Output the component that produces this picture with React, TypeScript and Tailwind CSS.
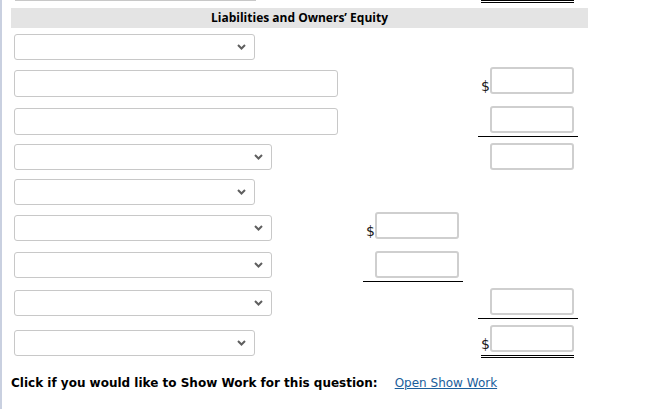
import React from "react";

function Chevron() {
  return (
    <svg width="9" height="6" viewBox="0 0 9 6" className="absolute right-[8px] top-1/2 -translate-y-1/2">
      <path d="M1 1 L4.5 4.5 L8 1" fill="none" stroke="#5f5f5f" strokeWidth="2" />
    </svg>
  );
}

function Select({ wide }: { wide?: boolean }) {
  return (
    <div
      className={`relative h-[26px] rounded-[3px] border border-[#c8c8c8] bg-white ${
        wide ? "w-[258px]" : "w-[241px]"
      }`}
    >
      <Chevron />
    </div>
  );
}

function TextBox() {
  return <div className="h-[27px] w-[324px] rounded-[3px] border border-[#c8c8c8] bg-white" />;
}

function Amount({ dollar, line }: { dollar?: boolean; line?: boolean }) {
  return (
    <div className={`flex w-[100px] items-end ${line ? "border-b border-black pb-[3px]" : ""}`}>
      <span className="w-[12px] pl-[3px] text-[14px] leading-[15px] text-[#1a1a1a]">
        {dollar ? "$" : ""}
      </span>
      <div className="h-[27px] w-[84px] rounded-[3px] border-2 border-[#cfcfcf] bg-white" />
    </div>
  );
}

function Row({
  h,
  left,
  mid,
  right,
}: {
  h: string;
  left: React.ReactNode;
  mid?: React.ReactNode;
  right?: React.ReactNode;
}) {
  return (
    <div className={`flex ${h}`}>
      <div className="w-[352px] pl-[3px]">{left}</div>
      <div className="w-[115px]">{mid}</div>
      <div className="w-[110px]">{right}</div>
    </div>
  );
}

export default function App() {
  return (
    <div
      className="relative h-[409px] w-[665px] overflow-hidden bg-white"
      style={{ fontFamily: "'DejaVu Sans', Verdana, sans-serif" }}
    >
      <div className="absolute left-0 top-0 h-full w-[2px] bg-[#c9d0e0]" />
      <div className="pl-[11px]">
        {/* top remnants */}
        <div className="flex h-[8px]">
          <div className="ml-[4px] h-[1px] w-[241px] bg-[#c8c8c8]" />
          <div className="ml-[225px] h-[3px] w-[93px] border-y border-black" />
        </div>

        <div
          className="flex h-[20px] w-[577px] items-center justify-center bg-[#e4e4e4] text-[12px] font-bold text-black"
          style={{ fontFamily: "'Open Sans', sans-serif" }}
        >
          Liabilities and Owners’ Equity
        </div>

        <Row h="h-[38px]" left={<div className="pt-[6px]"><Select /></div>} />
        <Row
          h="h-[38px]"
          left={<div className="pt-[4px]"><TextBox /></div>}
          right={<div className="pt-[1px]"><Amount dollar /></div>}
        />
        <Row
          h="h-[38px]"
          left={<div className="pt-[4px]"><TextBox /></div>}
          right={<div className="pt-[2px]"><Amount line /></div>}
        />
        <Row
          h="h-[35px]"
          left={<div className="pt-[2px]"><Select wide /></div>}
          right={<div className="pt-[1px]"><Amount /></div>}
        />
        <Row h="h-[33px]" left={<div className="pt-[2px]"><Select /></div>} />
        <Row
          h="h-[38px]"
          left={<div className="pt-[5px]"><Select wide /></div>}
          mid={<div className="pt-[2px]"><Amount dollar /></div>}
        />
        <Row
          h="h-[38px]"
          left={<div className="pt-[4px]"><Select wide /></div>}
          mid={<div className="pt-[3px]"><Amount line /></div>}
        />
        <Row
          h="h-[36px]"
          left={<div className="pt-[4px]"><Select wide /></div>}
          right={<div className="pt-[2px]"><Amount line /></div>}
        />
        <Row
          h="h-[38px]"
          left={<div className="pt-[8px]"><Select /></div>}
          right={
            <div className="pt-[3px]">
              <div className="flex w-[100px] flex-col">
                <Amount dollar />
                <div className="ml-[3px] mt-[3px] h-[3px] w-[93px] border-y border-black" />
              </div>
            </div>
          }
        />

        <div className="mt-[14px] flex items-center text-[12px]">
          <span className="font-bold text-black">Click if you would like to Show Work for this question:</span>
          <a href="#" className="ml-[17px] text-[#1b5e9b] underline">
            Open Show Work
          </a>
        </div>
      </div>
    </div>
  );
}
